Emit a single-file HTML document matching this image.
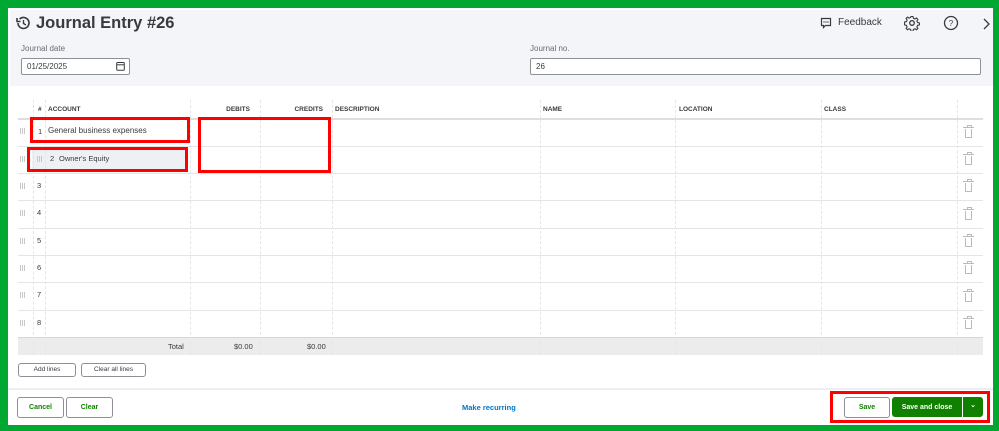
<!DOCTYPE html>
<html><head><meta charset="utf-8"><style>
*{box-sizing:border-box;margin:0;padding:0}
body{width:999px;height:431px;background:#00a832;position:relative;overflow:hidden;font-family:"Liberation Sans",Arial,sans-serif;color:#393a3d}
.page{position:absolute;left:8px;top:8px;width:985px;height:417px;background:#fff}
.abs{position:absolute}
.hdr{left:2px;top:2px;width:983px;height:76px;background:#f4f5f8}
.lbl{font-size:8px;color:#6b6c72}
.inp{border:1px solid #8d9096;border-radius:2px;background:#fff;font-size:8px;padding:0 5px;line-height:15px;height:17px}
.th{font-size:6.5px;font-weight:bold;color:#393a3d}
.hl{position:absolute;height:1px;background:#e3e5e8;left:10px;width:965px}
.vl{position:absolute;width:0;border-left:1px dashed #e3e5e8}
.rn{position:absolute;font-size:7.5px}
.grip{position:absolute;width:6px;height:6px;background:repeating-linear-gradient(90deg,#c6c8cc 0 1px,transparent 1px 2px)}
.trash{position:absolute;width:7px;height:9px;border:1px solid #b8babe;border-top:none;border-radius:0 0 1px 1px}
.trash:before{content:"";position:absolute;left:-3px;top:-2px;width:11px;height:1px;background:#b8babe}
.trash:after{content:"";position:absolute;left:1px;top:-4px;width:3px;height:2px;border:1px solid #b8babe;border-bottom:none}
.btn{position:absolute;border:1px solid #8d9096;border-radius:3px;background:#fff;font-size:7px;text-align:center;font-weight:bold}
.red{position:absolute;border:3px solid #f00}
</style></head><body>
<div class="page">
<div class="abs hdr"></div>
<svg class="abs" style="left:7px;top:7px" width="16" height="16" viewBox="0 0 16 16"><path d="M3 8a5.5 5.5 0 1 0 1.6-3.9" fill="none" stroke="#393a3d" stroke-width="1.6"/><path d="M2 3v3.5h3.5" fill="none" stroke="#393a3d" stroke-width="1.6"/><path d="M8.5 5v3.5l2.5 1.5" fill="none" stroke="#393a3d" stroke-width="1.4"/></svg>
<div class="abs" style="left:28px;top:6px;font-size:16.5px;font-weight:bold;color:#393a3d">Journal Entry #26</div>
<svg class="abs" style="left:812px;top:9px" width="12" height="12" viewBox="0 0 12 12"><path d="M1.5 1.5h9v7h-5l-2 2v-2h-2z" fill="none" stroke="#393a3d" stroke-width="1.2"/><circle cx="4" cy="5" r=".6"/><circle cx="6" cy="5" r=".6"/><circle cx="8" cy="5" r=".6"/></svg>
<div class="abs" style="left:830px;top:9px;font-size:10px;color:#393a3d">Feedback</div>
<svg class="abs" style="left:896px;top:7px" width="16" height="16" viewBox="0 0 16 16"><circle cx="8" cy="8" r="2.3" fill="none" stroke="#393a3d" stroke-width="1.3"/><path d="M7 1.5h2l.4 1.8 1.5.7 1.6-1 1.4 1.4-1 1.6.7 1.5 1.8.4v2l-1.8.4-.7 1.5 1 1.6-1.4 1.4-1.6-1-1.5.7-.4 1.8H7l-.4-1.8-1.5-.7-1.6 1-1.4-1.4 1-1.6-.7-1.5-1.8-.4V7l1.8-.4.7-1.5-1-1.6 1.4-1.4 1.6 1 1.5-.7z" fill="none" stroke="#393a3d" stroke-width="1.1"/></svg>
<svg class="abs" style="left:935px;top:7px" width="16" height="16" viewBox="0 0 16 16"><circle cx="8" cy="8" r="6.5" fill="none" stroke="#393a3d" stroke-width="1.3"/><text x="8" y="11" font-size="8" text-anchor="middle" font-family="Liberation Sans" fill="#393a3d">?</text></svg>
<svg class="abs" style="left:974px;top:10px" width="8" height="12" viewBox="0 0 8 12"><path d="M2 1l5 5-5 5" fill="none" stroke="#393a3d" stroke-width="1.3"/></svg>
<div class="abs lbl" style="left:13px;top:36px">Journal date</div>
<div class="abs inp" style="left:13px;top:50px;width:109px">01/25/2025</div>
<svg class="abs" style="left:108px;top:53px" width="9" height="10" viewBox="0 0 9 10"><rect x=".7" y="1.5" width="7.6" height="7.8" rx="1" fill="none" stroke="#393a3d" stroke-width="1"/><path d="M.7 3.8h7.6" stroke="#393a3d"/></svg>
<div class="abs lbl" style="left:522px;top:36px">Journal no.</div>
<div class="abs inp" style="left:522px;top:50px;width:451px">26</div>

<div class="abs th" style="left:30px;top:98px">#</div>
<div class="abs th" style="left:40px;top:98px">ACCOUNT</div>
<div class="abs th" style="left:202px;top:98px;width:40px;text-align:right">DEBITS</div>
<div class="abs th" style="left:270px;top:98px;width:45px;text-align:right">CREDITS</div>
<div class="abs th" style="left:327px;top:98px">DESCRIPTION</div>
<div class="abs th" style="left:535px;top:98px">NAME</div>
<div class="abs th" style="left:671px;top:98px">LOCATION</div>
<div class="abs th" style="left:816px;top:98px">CLASS</div>
<div class="hl" style="top:110px;height:2px;background:#dcdee2"></div>
<div class="hl" style="top:138px"></div><div class="hl" style="top:165px"></div><div class="hl" style="top:192px"></div><div class="hl" style="top:220px"></div><div class="hl" style="top:247px"></div><div class="hl" style="top:274px"></div><div class="hl" style="top:302px"></div>
<div class="abs" style="left:10px;top:329px;width:965px;height:18px;background:#ececec;border-top:1px solid #d4d6da"></div>
<div class="abs" style="left:24px;top:141px;width:155px;height:22px;background:#eef0f3"></div>
<div class="vl" style="left:25px;top:92px;height:255px"></div><div class="vl" style="left:37px;top:92px;height:255px"></div><div class="vl" style="left:182px;top:92px;height:255px"></div><div class="vl" style="left:252px;top:92px;height:255px"></div><div class="vl" style="left:324px;top:92px;height:255px"></div><div class="vl" style="left:532px;top:92px;height:255px"></div><div class="vl" style="left:667px;top:92px;height:255px"></div><div class="vl" style="left:813px;top:92px;height:255px"></div><div class="vl" style="left:949px;top:92px;height:255px"></div>

<div class="grip" style="left:12px;top:120px"></div><div class="rn" style="left:30px;top:119px">1</div><div class="abs" style="left:40px;top:118px;font-size:8px">General business expenses</div>
<div class="grip" style="left:12px;top:148px"></div><div class="grip" style="left:29px;top:148px"></div><div class="rn" style="left:42px;top:146px">2</div><div class="abs" style="left:51px;top:146px;font-size:7.5px">Owner's Equity</div>
<div class="grip" style="left:12px;top:175px"></div><div class="rn" style="left:29px;top:173px">3</div>
<div class="grip" style="left:12px;top:202px"></div><div class="rn" style="left:29px;top:200px">4</div>
<div class="grip" style="left:12px;top:230px"></div><div class="rn" style="left:29px;top:228px">5</div>
<div class="grip" style="left:12px;top:257px"></div><div class="rn" style="left:29px;top:255px">6</div>
<div class="grip" style="left:12px;top:284px"></div><div class="rn" style="left:29px;top:282px">7</div>
<div class="grip" style="left:12px;top:312px"></div><div class="rn" style="left:29px;top:310px">8</div>
<div class="trash" style="left:957px;top:121px"></div><div class="trash" style="left:957px;top:148px"></div><div class="trash" style="left:957px;top:175px"></div><div class="trash" style="left:957px;top:203px"></div><div class="trash" style="left:957px;top:230px"></div><div class="trash" style="left:957px;top:257px"></div><div class="trash" style="left:957px;top:285px"></div><div class="trash" style="left:957px;top:312px"></div>
<div class="abs" style="left:160px;top:334px;font-size:7.5px">Total</div>
<div class="abs" style="left:226px;top:334px;font-size:7.5px">$0.00</div>
<div class="abs" style="left:299px;top:334px;font-size:7.5px">$0.00</div>

<div class="btn" style="left:10px;top:355px;width:58px;height:14px;line-height:12px;font-weight:normal;font-size:6.5px">Add lines</div>
<div class="btn" style="left:73px;top:355px;width:65px;height:14px;line-height:12px;font-weight:normal;font-size:6.5px">Clear all lines</div>
<div class="abs" style="left:0;top:380px;width:985px;height:2px;background:#eceef1"></div>
<div class="btn" style="left:9px;top:389px;width:47px;height:21px;line-height:20px;color:#108000">Cancel</div>
<div class="btn" style="left:58px;top:389px;width:47px;height:21px;line-height:20px;color:#108000">Clear</div>
<div class="abs" style="left:454px;top:395px;font-size:7.5px;color:#0077c5;font-weight:bold">Make recurring</div>
<div class="btn" style="left:836px;top:389px;width:46px;height:21px;line-height:20px;color:#108000">Save</div>
<div class="btn" style="left:884px;top:389px;width:70px;height:20px;line-height:19px;color:#fff;background:#108000;border-color:#108000;border-radius:3px 0 0 3px">Save and close</div>
<div class="btn" style="left:955px;top:389px;width:20px;height:20px;line-height:16px;color:#fff;background:#108000;border-color:#108000;border-radius:0 3px 3px 0">⌄</div>

<div class="red" style="left:22px;top:109px;width:160px;height:26px"></div>
<div class="red" style="left:19px;top:139px;width:161px;height:25px"></div>
<div class="red" style="left:190px;top:109px;width:133px;height:56px"></div>
<div class="red" style="left:822px;top:383px;width:160px;height:32px"></div>
</div>
</body></html>
